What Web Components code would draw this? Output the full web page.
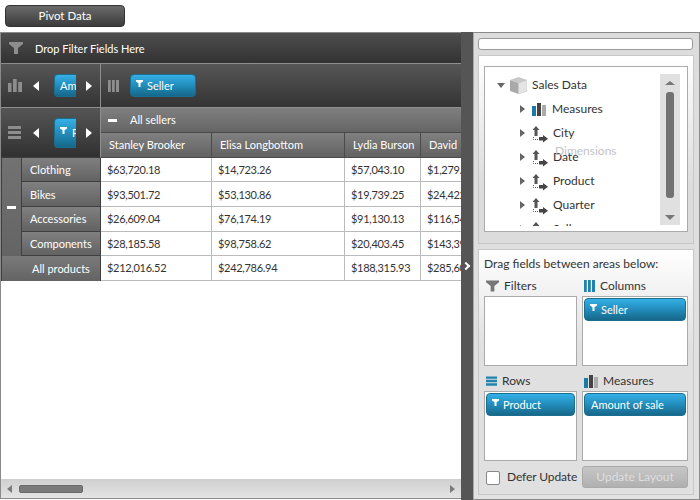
<!DOCTYPE html>
<html><head><meta charset="utf-8">
<style>
html,body{margin:0;padding:0;background:#fff;width:700px;height:500px;overflow:hidden}
body{font:12px/16px Lato,sans-serif;color:#333}
</style></head><body>
<pivot-app></pivot-app>
<script>
const FUNNEL='<svg width="7" height="7" viewBox="0 0 7 7"><path d="M0 0H7V1.500L4.500 3.200V7H2.500V3.200L0 1.500Z" fill="#fff"/></svg>';
const def=(n,html,init)=>customElements.define(n,class extends HTMLElement{connectedCallback(){if(this.shadowRoot)return;const s=this.attachShadow({mode:'open'});s.innerHTML=html;if(init)init.call(this,s)}});

def('field-chip',`<style>
:host{display:flex;align-items:center;box-sizing:border-box;height:23px;padding-left:5px;gap:4px;color:#fff;font-size:11px;white-space:nowrap;overflow:hidden;
border:1px solid #1a6f90;border-radius:4px;background:linear-gradient(#35b0e6,#2490c0 45%,#16688a);}
:host([clip]){border-radius:4px 0 0 4px;border-right:0}
span{display:flex;flex:none;margin-top:-5px}
:host([plain]){padding-left:6px}
</style><span id="i">${FUNNEL}</span><slot></slot>`,function(s){if(this.hasAttribute('plain'))s.getElementById('i').remove();});

def('tri-btn',`<style>:host{display:block;width:0;height:0;border-style:solid;border-color:transparent;border-width:5.5px 0 5.5px 6px;border-left-color:#fff}
:host([left]){border-width:5.5px 6px 5.5px 0;border-right-color:#fff;border-left-color:transparent}</style>`);

def('grid-cell',`<style>
:host{display:flex;align-items:center;box-sizing:border-box;overflow:hidden;white-space:nowrap;padding-left:6px;color:#333;background:#fff;border-right:1px solid #bbb;border-bottom:1px solid #bbb;font-size:11px;letter-spacing:-.3px}
:host([head]){color:#fff;background:linear-gradient(#808080,#626262);border-right:1px solid #4a4a4a;border-bottom:1px solid #4a4a4a;padding-left:8px;letter-spacing:0}
:host([rh]){color:#fff;background:linear-gradient(#808080,#626262);border-right:1px solid #3f3f3f;border-bottom:1px solid #3f3f3f;padding-left:8px;letter-spacing:0}
:host([total]){background:linear-gradient(#7a7a7a,#636363);padding-left:9px;color:#fff;border-bottom:0;border-right:1px solid #3f3f3f;letter-spacing:0}
:host([nudge]){padding-top:2px}
:host([last]){border-right:0}
</style><slot></slot>`);

def('pivot-grid',`<style>
:host{display:flex;flex-direction:column;box-sizing:border-box;width:461px;height:467px;border:1px solid #8a8a8a;border-right:0;background:#fff;flex:none}
.filter{height:31px;flex:none;display:flex;align-items:center;gap:12px;padding-left:8px;box-sizing:border-box;color:#fff;font-size:11px;background:linear-gradient(#4e4e4e,#323232);border-bottom:1px solid #8e8e8e}
.filter span{padding-top:2px}
.bar{flex:none;height:44px;display:flex;box-sizing:border-box;border-bottom:1px solid #8e8e8e;background:linear-gradient(#565656,#343434)}
.l{width:100px;flex:none;box-sizing:border-box;display:flex;align-items:center;border-right:1px solid #8e8e8e;padding-left:7px}
.l svg{flex:none}
.nav{display:flex;align-items:center;margin-left:11px}
.nav field-chip{width:22px;margin:0 10px 0 15px;padding-left:5px;gap:5px}
.r{flex:1;display:flex;align-items:center;padding-left:7px;gap:11px;background:linear-gradient(#565656,#343434)}
.r field-chip{width:66px}
.body{flex:none;display:grid;grid-template-columns:100px 111px 133px 76px 40px;grid-template-rows:25px 25px 24px 25px 25px 24px 25px}
.corner{grid-row:1/3;display:flex;align-items:center;padding-left:7px;box-sizing:border-box;background:linear-gradient(#555,#313131);border-right:1px solid #8e8e8e;border-bottom:1px solid #3f3f3f}
.corner .nav{margin-left:11px}
.corner field-chip{height:30px}
.all{grid-column:2/6;display:flex;align-items:center;color:#fff;font-size:11px;padding-left:7px;gap:13px;background:linear-gradient(#7f7f7f,#656565);border-bottom:1px solid #4a4a4a;box-sizing:border-box}
.minus{width:9px;height:3px;background:#fff;flex:none}
.rows{grid-row:3/7;display:grid;grid-template-columns:21px 79px;grid-template-rows:24px 25px 25px 24px}
.exp{grid-row:1/5;display:flex;align-items:center;justify-content:center;box-sizing:border-box;border-left:1px solid #3f3f3f;border-right:1px solid #3f3f3f;background:linear-gradient(#727272,#646464)}
.spacer{flex:1}
.sb{flex:none;height:19px;display:flex;align-items:center;box-sizing:border-box;padding:0 6px;background:linear-gradient(#cfcfcf,#e4e4e4)}
.th{width:64px;height:8px;margin-left:7px;border-radius:2px;background:#7a7a7a;border:1px solid #6a6a6a;box-sizing:border-box}
.tl{width:0;height:0;border-style:solid;border-color:transparent #7a7a7a transparent transparent;border-width:4.5px 5px 4.5px 0}
.tr{width:0;height:0;border-style:solid;border-color:transparent transparent transparent #7a7a7a;border-width:4.5px 0 4.5px 5px;margin-left:auto}
</style>
<div class="filter"><svg width="14" height="12" viewBox="0 0 14 12"><path d="M0 0H14V2L9 6V12H5V6L0 2Z" fill="#8d8d8d"/></svg><span>Drop Filter Fields Here</span></div>
<div class="bar"><div class="l"><svg width="14" height="13" viewBox="0 0 14 13"><path d="M0 4H3.500V13H0ZM5 0H8.700V13H5ZM10.200 3H14V13H10.200Z" fill="#8d8d8d"/></svg>
<div class="nav"><tri-btn left></tri-btn><field-chip plain clip>Am</field-chip><tri-btn></tri-btn></div></div>
<div class="r"><svg width="11" height="12" viewBox="0 0 11 12"><path d="M0 0H2.800V12H0ZM4 0H6.800V12H4ZM8 0H11V12H8Z" fill="#8d8d8d"/></svg><field-chip>Seller</field-chip></div></div>
<div class="body">
<div class="corner"><svg width="14" height="13" viewBox="0 0 14 13"><path d="M0 0H13V3H0ZM0 5H13V8H0ZM0 10H13V13H0Z" fill="#8d8d8d"/></svg><div class="nav"><tri-btn left></tri-btn><field-chip clip>P</field-chip><tri-btn></tri-btn></div></div>
<div class="all"><span class="minus"></span><span>All sellers</span></div>
<grid-cell head>Stanley Brooker</grid-cell><grid-cell head>Elisa Longbottom</grid-cell><grid-cell head>Lydia Burson</grid-cell><grid-cell head last>David</grid-cell>
<div class="rows"><div class="exp"><span class="minus"></span></div>
<grid-cell rh style="grid-column:2;grid-row:1">Clothing</grid-cell><grid-cell rh nudge style="grid-column:2;grid-row:2">Bikes</grid-cell><grid-cell rh style="grid-column:2;grid-row:3">Accessories</grid-cell><grid-cell rh style="grid-column:2;grid-row:4">Components</grid-cell></div>
<grid-cell style="grid-column:2;grid-row:3">$63,720.18</grid-cell><grid-cell style="grid-column:3;grid-row:3">$14,723.26</grid-cell><grid-cell style="grid-column:4;grid-row:3">$57,043.10</grid-cell><grid-cell style="grid-column:5;grid-row:3" last>$1,279.45</grid-cell>
<grid-cell nudge style="grid-column:2;grid-row:4">$93,501.72</grid-cell><grid-cell nudge style="grid-column:3;grid-row:4">$53,130.86</grid-cell><grid-cell nudge style="grid-column:4;grid-row:4">$19,739.25</grid-cell><grid-cell nudge style="grid-column:5;grid-row:4" last>$24,422.15</grid-cell>
<grid-cell style="grid-column:2;grid-row:5">$26,609.04</grid-cell><grid-cell style="grid-column:3;grid-row:5">$76,174.19</grid-cell><grid-cell style="grid-column:4;grid-row:5">$91,130.13</grid-cell><grid-cell style="grid-column:5;grid-row:5" last>$116,544.10</grid-cell>
<grid-cell style="grid-column:2;grid-row:6">$28,185.58</grid-cell><grid-cell style="grid-column:3;grid-row:6">$98,758.62</grid-cell><grid-cell style="grid-column:4;grid-row:6">$20,403.45</grid-cell><grid-cell style="grid-column:5;grid-row:6" last>$143,392.10</grid-cell>
<grid-cell total style="grid-column:1;grid-row:7;padding-left:30px;border-left:1px solid #3f3f3f">All products</grid-cell>
<grid-cell style="grid-column:2;grid-row:7">$212,016.52</grid-cell><grid-cell style="grid-column:3;grid-row:7">$242,786.94</grid-cell><grid-cell style="grid-column:4;grid-row:7">$188,315.93</grid-cell><grid-cell style="grid-column:5;grid-row:7" last>$285,601.80</grid-cell>
</div>
<div class="spacer"></div>
<div class="sb"><span class="tl"></span><span class="th"></span><span class="tr"></span></div>`);

def('tree-node',`<style>
:host{display:flex;align-items:center;height:24px;flex:none;font-size:12px;color:#333;white-space:nowrap}
.a{width:0;height:0;border-style:solid;border-color:transparent transparent transparent #666;border-width:4px 0 4px 5px;margin-right:7px;flex:none}
#ic{display:flex;flex:none}
</style><span class="a"></span><span id="ic"></span><slot></slot>`,function(s){
const ic=s.getElementById('ic');
if(this.getAttribute('icon')==='m')ic.innerHTML='<svg width="15" height="13" viewBox="0 0 15 13" style="margin-right:5px"><rect y="3" width="4" height="10" fill="#1c7ba6"/><rect x="5" width="4" height="13" fill="#444"/><rect x="10" y="2" width="4" height="11" fill="#aaa"/></svg>';
else ic.innerHTML='<svg width="16" height="18" viewBox="0 0 16 18" style="margin:4px 5px 0 0"><path d="M4 0L7.500 4H5.500V10H2.500V4H.5Z" fill="#555"/><path d="M11 9V11H7V14.500H11V16.500L16 12.700Z" fill="#444"/><path d="M1.500 11V13.500H6.500" stroke="#555" stroke-dasharray="1 1" fill="none"/></svg>';
});

def('drop-zone',`<style>
:host{display:block;min-width:0}
.h{display:flex;align-items:center;height:20px;gap:5px;padding-left:2px;font-size:12px;color:#333}
.b{box-sizing:border-box;height:70px;border:1px solid #aaa;background:#fff;padding:1px}
</style><div class="h"><slot name="icon"></slot><span id="t"></span></div><div class="b"><slot></slot></div>`,function(s){s.getElementById('t').textContent=this.getAttribute('label')});

def('field-list',`<style>
:host{display:flex;flex-direction:column;flex:none;box-sizing:border-box;width:227px;height:468px;background:linear-gradient(#dcdcdc,#e2e2e2);border:1px solid #8a8a8a;border-left:1px solid #aaa;padding:5px 6px 4px 4px;gap:5px}
.search{height:12px;box-sizing:border-box;flex:none;background:#fff;border:1px solid #999;border-radius:3px}
.card{background:linear-gradient(#fff,#dcdcdc 70%);border:1px solid #c8c8c8;box-sizing:border-box;width:216px}
.top{height:189px;padding:10px 5px;flex:none}
.tree{box-sizing:border-box;height:166px;border:1px solid #aaa;background:#fff;display:flex;padding:6px 7px 5px 12px;position:relative}
.nodes{flex:1;min-width:0;display:flex;flex-direction:column;overflow:hidden}
.root{display:flex;align-items:center;height:24px;flex:none;font-size:12px;gap:5px}
.down{width:0;height:0;border-style:solid;border-color:#666 transparent transparent;border-width:5px 4px 0;flex:none}
.ind{padding-left:23px;display:flex;flex-direction:column}
.scroll{width:20px;flex:none;background:#e0e0e0;display:flex;flex-direction:column;align-items:center;height:151px;box-sizing:border-box;padding-top:7px;margin-top:1px}
.up,.dn{width:0;height:0;border-style:solid;border-color:transparent;flex:none}
.up{border-width:0 5px 4px;border-bottom-color:#777}
.dn{border-width:5px 5px 0;border-top-color:#777;margin-top:17px}
.th{width:8px;flex:none;height:106px;margin-top:7px;background:#727272;border-radius:3px}
.ghost{position:absolute;left:70px;top:76px;color:#c4c4c4;font-size:12px}
.bottom{flex:1;padding:5px 5px 0;background:linear-gradient(#fff,#e0e0e0 40%)}
.title{font-size:12px;height:18px;line-height:18px;color:#333;margin-bottom:3px}
.zones{display:grid;grid-template-columns:93px 106px;column-gap:5px;row-gap:5px}
.foot{display:flex;align-items:center;height:24px;margin-top:4px;padding-left:2px;font-size:12px;color:#333}
.cb{width:14px;height:14px;box-sizing:border-box;border:1px solid #888;border-radius:2px;background:#fff;margin-right:7px;flex:none;margin-top:2px}
.foot span:nth-child(2){letter-spacing:-.1px}
.btn{margin-left:auto;width:106px;height:22px;box-sizing:border-box;border:1px solid #aaa;border-radius:3px;background:linear-gradient(#c6c6c6,#b0b0b0);color:#dedede;text-align:center;line-height:20px;font-size:12px}
</style>
<div class="search"></div>
<div class="card top"><div class="tree"><div class="nodes">
<div class="root"><span class="down"></span><svg width="17" height="17" viewBox="0 0 17 17"><path d="M8.500 0L17 3L8.500 6L0 3Z" fill="#c8c8c8"/><path d="M0 3L8.500 6V17L0 14Z" fill="#a9a9a9"/><path d="M17 3L8.500 6V17L17 14Z" fill="#e4e4e4" stroke="#bbb" stroke-width=".5"/></svg><span>Sales Data</span></div>
<div class="ind"><tree-node icon="m">Measures</tree-node><tree-node>City</tree-node><tree-node>Date</tree-node><tree-node>Product</tree-node><tree-node>Quarter</tree-node><tree-node>Seller</tree-node></div>
</div><div class="scroll"><span class="up"></span><span class="th"></span><span class="dn"></span></div><span class="ghost">Dimensions</span></div></div>
<div class="card bottom"><div class="title">Drag fields between areas below:</div>
<div class="zones">
<drop-zone label="Filters"><svg slot="icon" width="13" height="12" viewBox="0 0 14 12"><path d="M0 0H14V2L9 6V12H5V6L0 2Z" fill="#777"/></svg></drop-zone>
<drop-zone label="Columns"><svg slot="icon" width="11" height="12" viewBox="0 0 11 12"><path d="M0 0H2.800V12H0ZM4 0H6.800V12H4ZM8 0H11V12H8Z" fill="#2282ad"/></svg><field-chip>Seller</field-chip></drop-zone>
<drop-zone label="Rows"><svg slot="icon" width="11" height="11" viewBox="0 0 13 12"><path d="M0 0H13V2.800H0ZM0 4H13V6.800H0ZM0 8H13V11H0Z" fill="#2282ad"/></svg><field-chip>Product</field-chip></drop-zone>
<drop-zone label="Measures"><svg slot="icon" width="14" height="13" viewBox="0 0 14 13"><rect y="3" width="4" height="10" fill="#1c7ba6"/><rect x="5" width="4" height="13" fill="#444"/><rect x="10" y="2" width="4" height="11" fill="#aaa"/></svg><field-chip plain>Amount of sale</field-chip></drop-zone>
</div>
<div class="foot"><span class="cb"></span><span>Defer Update</span><span class="btn">Update Layout</span></div>
</div>`);

def('pivot-app',`<style>
:host{display:block;width:700px;height:500px;overflow:hidden}
.top{height:32px;box-sizing:border-box;padding:5px}
.pb{width:120px;height:22px;box-sizing:border-box;border:1px solid #333;border-radius:4px;background:linear-gradient(#6a6a6a,#3c3c3c);color:#fff;font-size:11.5px;text-align:center;line-height:20px}
.main{display:flex;align-items:flex-start}
.split{flex:none;width:12px;height:468px;background:#555;display:flex;align-items:center;justify-content:center}
.split i{display:block;width:4px;height:4px;border-top:2px solid #fff;border-right:2px solid #fff;transform:rotate(45deg);margin-left:-3px}
</style>
<div class="top"><div class="pb">Pivot Data</div></div>
<div class="main"><pivot-grid></pivot-grid><div class="split"><i></i></div><field-list></field-list></div>`);
</script>
</body></html>
